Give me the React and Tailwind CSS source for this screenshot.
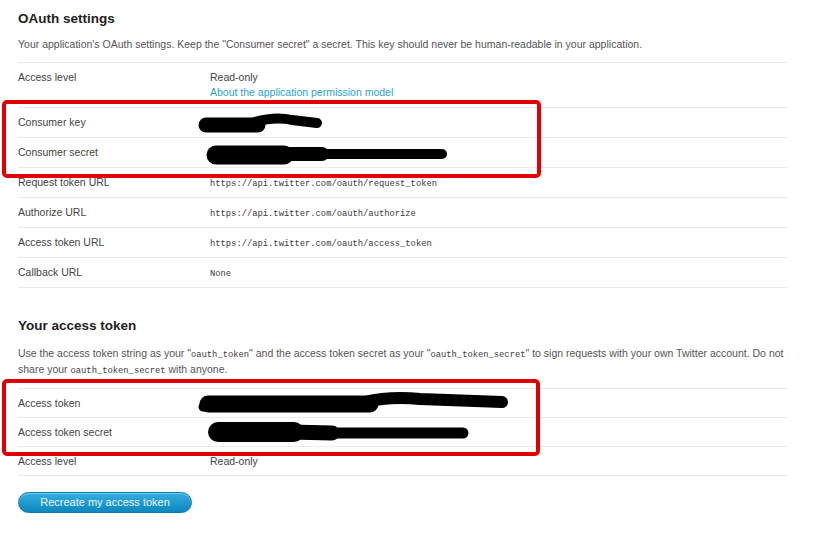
import React from 'react';

const mono = "leading-none font-['Liberation_Mono','DejaVu_Sans_Mono',monospace] text-[8.8px] text-[#3a3a3a]";

function Row({ label, children, tight }) {
  return (
    <div
      className={
        'flex border-b border-[#ebebeb] ' +
        (tight ? 'py-[7px] leading-[14px]' : 'py-[7px] leading-[15px]')
      }
    >
      <div className="w-[192px] shrink-0 text-[#444]">{label}</div>
      <div className="text-[#444]">{children}</div>
    </div>
  );
}

function Annotations() {
  return (
    <svg
      className="pointer-events-none absolute left-0 top-0"
      width="837"
      height="535"
      viewBox="0 0 837 535"
      fill="none"
    >
      <rect x="4" y="102" width="535" height="74" rx="3" stroke="#e00000" strokeWidth="4" />
      <rect x="4" y="381" width="534" height="73" rx="3" stroke="#e00000" strokeWidth="4" />
      <g stroke="#000" strokeLinecap="round" strokeLinejoin="round">
        {/* consumer key */}
        <path d="M206 125 L258 125" strokeWidth="15" />
        <path d="M255 122 Q275 116 292 120 L317 123" strokeWidth="10" />
        {/* consumer secret */}
        <path d="M216 155 L284 155" strokeWidth="19" />
        <path d="M280 154 L322 154" strokeWidth="14" />
        <path d="M300 154 L442 154" strokeWidth="10" />
        {/* access token */}
        <path d="M203 407 L215 406" strokeWidth="9" />
        <path d="M208 404 L370 404" strokeWidth="17" />
        <path d="M365 402 Q390 396 420 399 L502 402" strokeWidth="12" />
        {/* access token secret */}
        <path d="M218 432 L294 432" strokeWidth="20" />
        <path d="M290 432 L332 433" strokeWidth="15" />
        <path d="M310 433 L463 433" strokeWidth="11" />
      </g>
    </svg>
  );
}

export default function App() {
  return (
    <div className="relative h-[535px] w-[837px] overflow-hidden bg-white font-['Liberation_Sans',Arial,sans-serif] text-[10.5px] text-[#444]">
      <div className="pl-[18px] pt-[11px]">
        <h2 className="text-[13.5px] font-bold leading-4 text-[#222]">OAuth settings</h2>
        <p className="mt-[9px] leading-4 text-[#555]">
          Your application's OAuth settings. Keep the "Consumer secret" a secret. This key should never be
          human-readable in your application.
        </p>

        <div className="mt-[10px] w-[769px] border-t border-[#ebebeb]">
          <Row label="Access level">
            <div>Read-only</div>
            <a className="text-[#2a9fd6]" href="#">
              About the application permission model
            </a>
          </Row>
          <Row label="Consumer key">&nbsp;</Row>
          <Row label="Consumer secret">&nbsp;</Row>
          <Row label="Request token URL">
            <span className={mono}>https://api.twitter.com/oauth/request_token</span>
          </Row>
          <Row label="Authorize URL">
            <span className={mono}>https://api.twitter.com/oauth/authorize</span>
          </Row>
          <Row label="Access token URL">
            <span className={mono}>https://api.twitter.com/oauth/access_token</span>
          </Row>
          <Row label="Callback URL">
            <span className={mono}>None</span>
          </Row>
        </div>

        <h2 className="mt-[30px] text-[13.5px] font-bold leading-4 text-[#222]">Your access token</h2>
        <p className="mt-[11px] w-[775px] leading-4 text-[#555]">
          Use the access token string as your "<span className={mono}>oauth_token</span>" and the access token
          secret as your "<span className={mono}>oauth_token_secret</span>" to sign requests with your own
          Twitter account. Do not
          <br />
          share your <span className={mono}>oauth_token_secret</span> with anyone.
        </p>

        <div className="mt-[11px] w-[769px] border-t border-[#ebebeb]">
          <Row tight label="Access token">&nbsp;</Row>
          <Row tight label="Access token secret">&nbsp;</Row>
          <Row tight label="Access level">Read-only</Row>
        </div>

        <button className="mt-[16px] h-[21px] w-[174px] rounded-full border border-[#0b78aa] bg-gradient-to-b from-[#33ade0] to-[#0c87be] text-[11px] leading-[19px] text-[#eaf6fc] shadow-[inset_0_1px_0_rgba(255,255,255,0.35)]">
          Recreate my access token
        </button>
      </div>

      <Annotations />
    </div>
  );
}
